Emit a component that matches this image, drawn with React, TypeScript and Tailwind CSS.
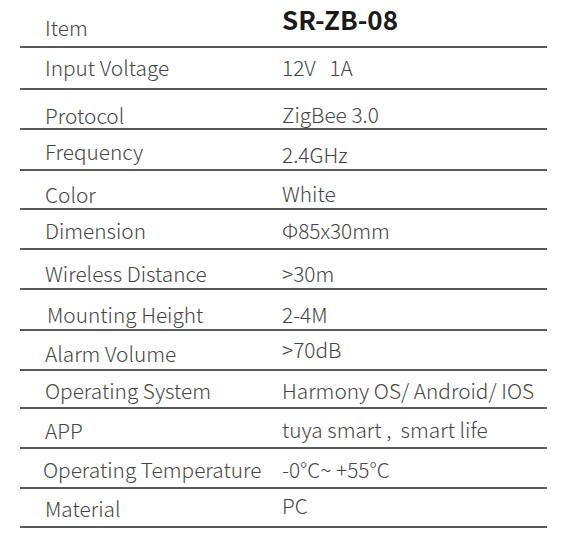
import React from "react";

type Row = {
  label: string;
  value: string;
  h: string;
  lp: string;
  vp: string;
  lx?: string;
};

const rows: Row[] = [
  { label: "Input Voltage", value: "12V\u00a0\u00a0 1A", h: "h-[42px]", lp: "pt-[7px]", vp: "pt-[7px]" },
  { label: "Protocol", value: "ZigBee 3.0", h: "h-[40px]", lp: "pt-[13px]", vp: "pt-[12px]" },
  { label: "Frequency", value: "2.4GHz", h: "h-[41px]", lp: "pt-[9px]", vp: "pt-[12px]" },
  { label: "Color", value: "White", h: "h-[39px]", lp: "pt-[11px]", vp: "pt-[10px]" },
  { label: "Dimension", value: "Φ85x30mm", h: "h-[40px]", lp: "pt-[8px]", vp: "pt-[8px]" },
  { label: "Wireless Distance", value: ">30m", h: "h-[40px]", lp: "pt-[11px]", vp: "pt-[11px]" },
  { label: "Mounting Height", value: "2-4M", h: "h-[41px]", lp: "pt-[12px]", vp: "pt-[12px]", lx: "pl-[27px]" },
  { label: "Alarm Volume", value: ">70dB", h: "h-[40px]", lp: "pt-[10px]", vp: "pt-[6px]" },
  { label: "Operating System", value: "Harmony OS/ Android/ IOS", h: "h-[38px]", lp: "pt-[7px]", vp: "pt-[7px]" },
  { label: "APP", value: "tuya smart ,\u00a0 smart life", h: "h-[40px]", lp: "pt-[9px]", vp: "pt-[8px]" },
  { label: "Operating Temperature", value: "-0°C~ +55°C", h: "h-[40px]", lp: "pt-[8px]", vp: "pt-[8px]", lx: "pl-[23px]" },
  { label: "Material", value: "PC", h: "h-[39px]", lp: "pt-[7px]", vp: "pt-[4px]" },
];

export default function App() {
  return (
    <div className="w-[568px] h-[542px] bg-white" style={{ fontFamily: '"Noto Sans CJK SC", "Noto Sans", sans-serif' }}>
      <div className="ml-[20px] w-[527px] flex flex-col">
        <div className="h-[48px] flex border-b-2 border-[#595959]">
          <div className="w-[262px] shrink-0 pl-[25px] pt-[15px] text-[20.8px] leading-[24px] font-light text-[#444]">Item</div>
          <div className="pt-[4px] text-[26px] leading-[30px] font-bold text-[#1a1a1a]">SR-ZB-08</div>
        </div>
        {rows.map((r) => (
          <div key={r.label} className={`${r.h} flex border-b-2 border-[#595959] text-[20.8px] leading-[24px] font-light text-[#444]`}>
            <div className={`w-[262px] shrink-0 ${r.lx ?? "pl-[25px]"} ${r.lp} whitespace-nowrap`}>{r.label}</div>
            <div className={`${r.vp} whitespace-nowrap`}>{r.value}</div>
          </div>
        ))}
      </div>
    </div>
  );
}
